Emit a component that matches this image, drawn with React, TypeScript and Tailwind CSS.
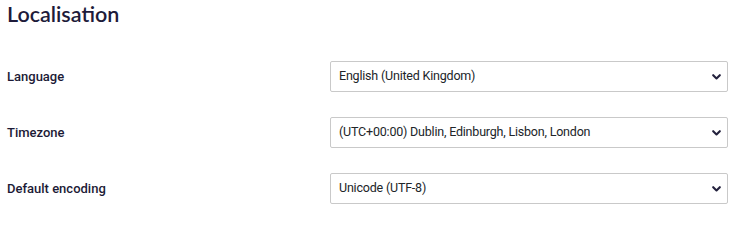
import React from "react";

type Field = { label: string; value: string };

const fields: Field[] = [
  { label: "Language", value: "English (United Kingdom)" },
  { label: "Timezone", value: "(UTC+00:00) Dublin, Edinburgh, Lisbon, London" },
  { label: "Default encoding", value: "Unicode (UTF-8)" },
];

function Chevron() {
  return (
    <svg width="9" height="6" viewBox="0 0 9 6" className="shrink-0">
      <polyline
        points="1.2,1.2 4.5,4.5 7.8,1.2"
        fill="none"
        stroke="#23213d"
        strokeWidth="2.1"
        strokeLinecap="round"
        strokeLinejoin="round"
      />
    </svg>
  );
}

export default function App() {
  return (
    <div className="w-[736px] h-[215px] bg-white pl-[7px] pr-[8px] pt-[2px]">
      <h2 className="font-['Lato',sans-serif] text-[21.5px] font-semibold leading-[24px] text-[#1e1b3a]">
        Localisation
      </h2>
      <div className="mt-[35px] flex flex-col gap-[25px]">
        {fields.map((f) => (
          <div key={f.label} className="flex items-center">
            <label className="w-[323px] shrink-0 font-['Roboto',sans-serif] text-[13px] font-medium text-[#1c1a36]">
              {f.label}
            </label>
            <div className="flex h-[31px] flex-1 items-center justify-between rounded-[2px] border border-[#c9c9c9] bg-white pl-[8px] pr-[6px] font-['Roboto',sans-serif] text-[12.5px] tracking-[-0.2px] text-[#212529]">
              <span>{f.value}</span>
              <Chevron />
            </div>
          </div>
        ))}
      </div>
    </div>
  );
}
